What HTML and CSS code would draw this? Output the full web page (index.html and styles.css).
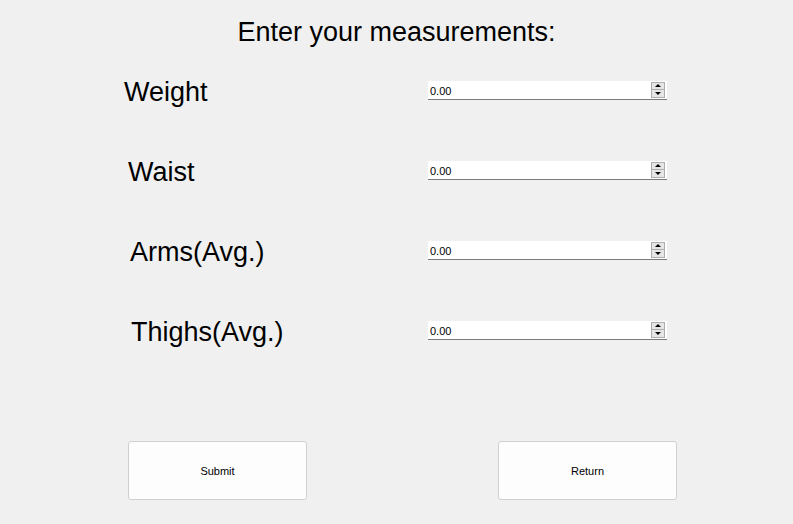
FILE: index.html
```html
<!DOCTYPE html>
<html>
<head>
<meta charset="utf-8">
<link rel="stylesheet" href="styles.css">
</head>
<body>
<div class="window">
  <h1 class="title">Enter your measurements:</h1>
  <div class="form">
    <div class="row">
      <label class="label off-0">Weight</label>
      <div class="spin"><span class="value">0.00</span><span class="arrows"><span class="up"></span><span class="down"></span></span></div>
    </div>
    <div class="row">
      <label class="label off-4">Waist</label>
      <div class="spin"><span class="value">0.00</span><span class="arrows"><span class="up"></span><span class="down"></span></span></div>
    </div>
    <div class="row">
      <label class="label off-6">Arms(Avg.)</label>
      <div class="spin"><span class="value">0.00</span><span class="arrows"><span class="up"></span><span class="down"></span></span></div>
    </div>
    <div class="row">
      <label class="label off-7">Thighs(Avg.)</label>
      <div class="spin"><span class="value">0.00</span><span class="arrows"><span class="up"></span><span class="down"></span></span></div>
    </div>
  </div>
  <div class="buttons">
    <button class="btn">Submit</button>
    <button class="btn">Return</button>
  </div>
</div>
</body>
</html>
```
FILE: styles.css
```css
html, body {
  margin: 0;
  padding: 0;
  background: #f0f0f0;
}
.window {
  width: 793px;
  height: 524px;
  font-family: "Liberation Sans", Arial, sans-serif;
  color: #000;
  display: flex;
  flex-direction: column;
}
.title {
  margin: 17px 0 0 0;
  font-size: 27px;
  font-weight: normal;
  line-height: 31px;
  text-align: center;
}
.form {
  margin-top: 2px;
  padding-left: 124px;
  display: flex;
  flex-direction: column;
}
.row {
  height: 80px;
  display: grid;
  grid-template-columns: 304px 239px;
  align-items: center;
}
.label {
  font-size: 27px;
  line-height: 31px;
  margin-top: 4px;
}
.off-0 { padding-left: 0; }
.off-4 { padding-left: 4px; }
.off-6 { padding-left: 6px; }
.off-7 { padding-left: 7px; }
.spin {
  height: 18px;
  background: #fff;
  border-bottom: 1px solid #7a7a7a;
  display: flex;
  align-items: center;
  justify-content: space-between;
  box-sizing: content-box;
}
.value {
  font-size: 11px;
  padding-left: 2px;
  padding-top: 2px;
}
.arrows {
  width: 12px;
  height: 14px;
  margin-right: 2px;
  border: 1px solid #adadad;
  background: #e5e5e5;
  display: flex;
  flex-direction: column;
}
.up, .down {
  flex: 1;
  display: flex;
  align-items: center;
  justify-content: center;
}
.up { border-bottom: 1px solid #adadad; }
.up::before {
  content: "";
  border-left: 3px solid transparent;
  border-right: 3px solid transparent;
  border-bottom: 3px solid #000;
}
.down::before {
  content: "";
  border-left: 3px solid transparent;
  border-right: 3px solid transparent;
  border-top: 3px solid #000;
}
.buttons {
  margin-top: 71px;
  padding-left: 128px;
  display: flex;
  gap: 191px;
}
.btn {
  width: 179px;
  height: 59px;
  background: #fdfdfd;
  border: 1px solid #d0d0d0;
  border-radius: 3px;
  font-family: "Liberation Sans", Arial, sans-serif;
  font-size: 11px;
  color: #000;
  padding: 0;
}
```
